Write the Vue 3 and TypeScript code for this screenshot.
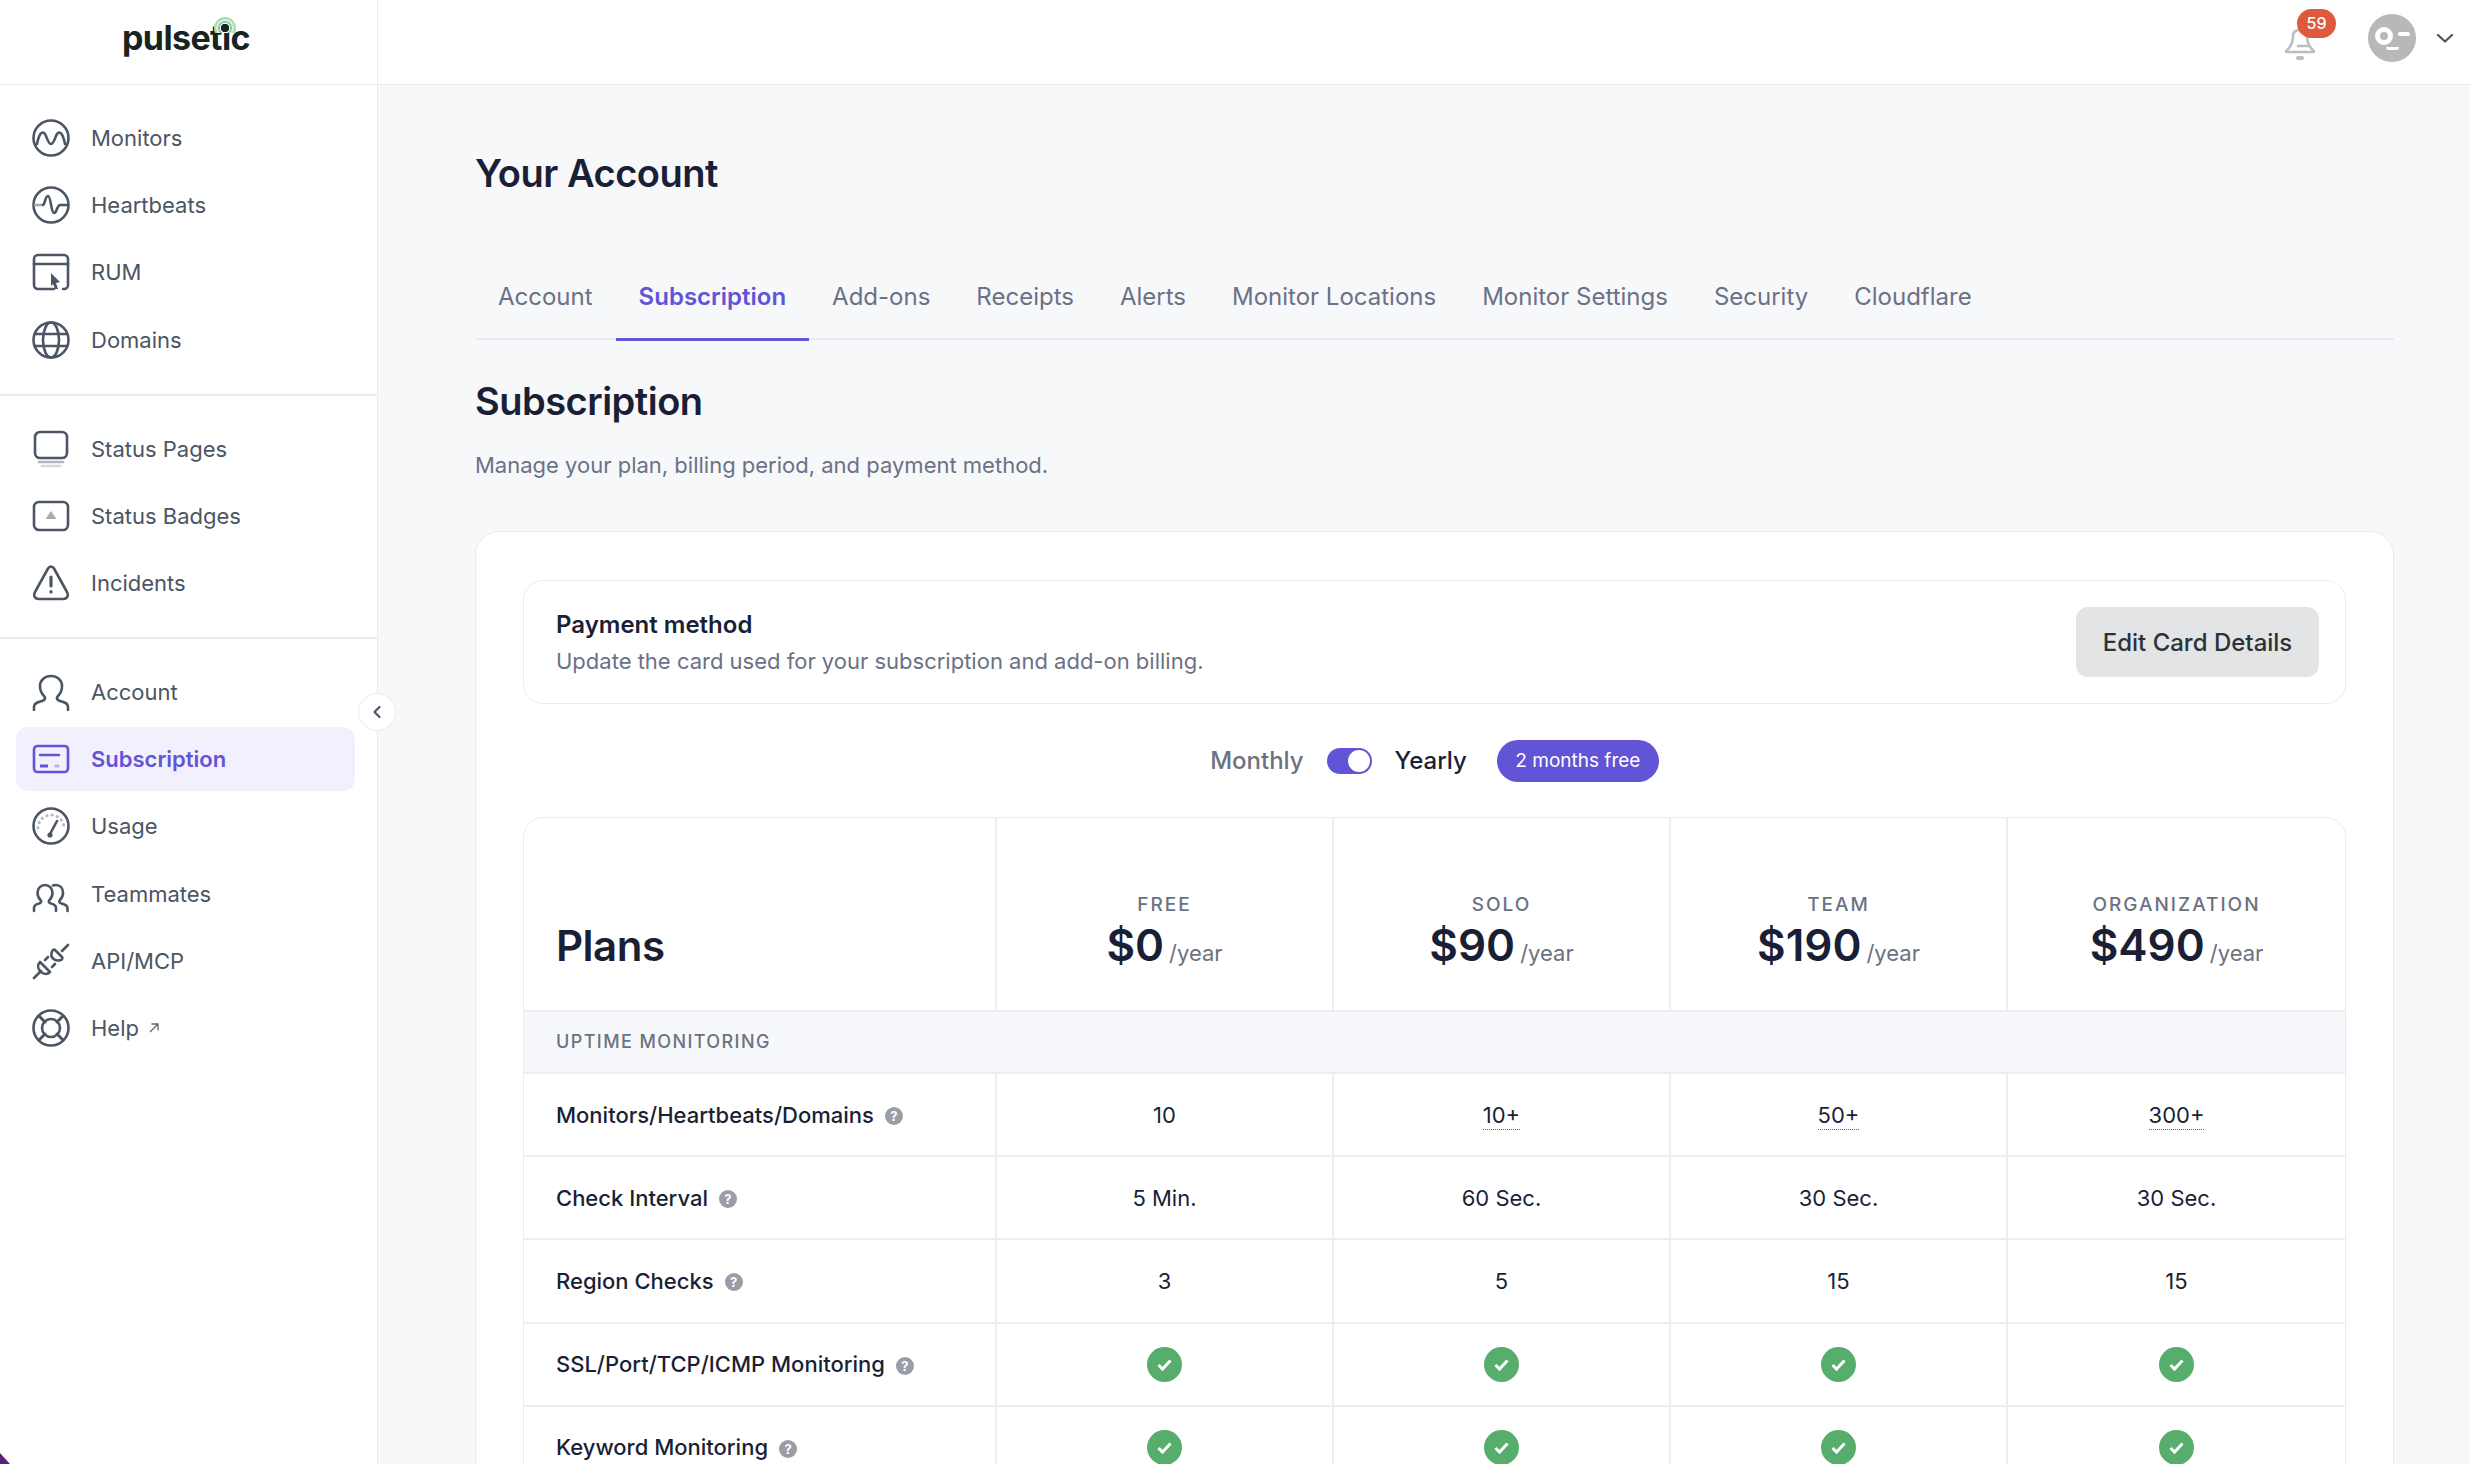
<template>
  <div class="shell">
    <aside class="sidebar">
      <div class="logo">
        <span class="logo-text">pulsetic</span>
        <span class="logo-ring"></span>
      </div>

      <nav v-for="(group, i) in navGroups" :key="i" class="nav-group">
        <a
          v-for="item in group"
          :key="item.label"
          class="nav-item"
          :class="{ active: item.label === 'Subscription' }"
        >
          <svg class="nav-icon" viewBox="0 0 38 38" fill="none" stroke="currentColor" stroke-width="2.6" stroke-linecap="round" stroke-linejoin="round">
            <template v-if="item.icon === 'monitor'">
              <circle cx="19" cy="19" r="17.5" />
              <path d="M5 25C7 15 10 11 13 15C15 18 16 25 19 25C22 25 23 18 25 15C28 11 31 15 33 25" />
            </template>
            <template v-else-if="item.icon === 'heartbeat'">
              <circle cx="19" cy="19" r="17.5" />
              <path d="M3 19H11" stroke="#a4a8b2" />
              <path d="M11 19C13 19 13 10 16 10C19 10 19 27 22 27C25 27 25 19 28 19H35" />
            </template>
            <template v-else-if="item.icon === 'rum'">
              <path d="M22 36H6a4 4 0 0 1-4-4V6a4 4 0 0 1 4-4h26a4 4 0 0 1 4 4v26a4 4 0 0 1-4 4h-1" />
              <path d="M2 11H36" />
              <path d="M19 20L28 29L24 30L26 36L23 36L21 31L19 33Z" fill="currentColor" stroke="none" />
            </template>
            <template v-else-if="item.icon === 'globe'">
              <circle cx="19" cy="19" r="17.5" />
              <ellipse cx="19" cy="19" rx="8" ry="17.5" />
              <path d="M3.5 13H34.5M3.5 25H34.5" />
            </template>
            <template v-else-if="item.icon === 'page'">
              <rect x="3" y="2" width="32" height="26" rx="5" />
              <path d="M7 32H31" stroke="#b4b7be" />
              <path d="M10 36H28" stroke="#d5d7db" />
            </template>
            <template v-else-if="item.icon === 'badge'">
              <rect x="2" y="5" width="34" height="28" rx="5" />
              <path d="M19 14L24.5 22H13.5Z" fill="#a8abb2" stroke="none" />
            </template>
            <template v-else-if="item.icon === 'alert'">
              <path d="M16 4.500C17.500 2 20.500 2 22 4.500L35 28C37 32 35 35 31 35H7C3 35 1 32 3 28Z" />
              <path d="M19 13V22" stroke-width="3.200" />
              <path d="M19 27.500V28" stroke-width="3.200" />
            </template>
            <template v-else-if="item.icon === 'user'">
              <path d="M2 37v-3c0-4 4-5 8-6c3-1 4-3 2-5c-3-3-4-6-4-10c0-6 5-10 11-10s11 4 11 10c0 4-1 7-4 10c-2 2-1 4 2 5c4 1 8 2 8 6v3" />
            </template>
            <template v-else-if="item.icon === 'card'">
              <rect x="2" y="6" width="34" height="26" rx="3.500" />
              <path d="M8 15H27" stroke-width="2.400" stroke-dasharray="2 1.500 12 1.500 2 1.500 2" />
              <path d="M8 26H16" stroke-width="3" stroke-linecap="butt" />
              <path d="M24 26H26" stroke-width="3" stroke="#b3adec" />
            </template>
            <template v-else-if="item.icon === 'gauge'">
              <circle cx="19" cy="19" r="17.5" />
              <path d="M6 21A13 13 0 0 1 32 21" stroke="#b4b7be" stroke-dasharray="0.500 4.800" stroke-width="2.800" />
              <path d="M18 27L25 14" stroke-width="2.600" />
              <circle cx="18" cy="28" r="2.600" fill="currentColor" stroke="none" />
            </template>
            <template v-else-if="item.icon === 'team'">
              <path d="M2 36v-3c0-3 3-4 5-4.500c2-.5 3-2 1.500-3.500c-2-2-3-4-3-7c0-5 3.500-8 7.500-8s7.500 3 7.500 8c0 3-1 5-3 7c-1.500 1.500-.5 3 1.500 3.500c2 .5 5 1.500 5 4.500v3" />
              <path d="M21 10.500c1-.5 2-.500 3-.5c4 0 7 3 7 8c0 3-1 5-3 7c-1.500 1.500-.5 3 1.500 3.500c2 .5 6 1.500 6 4.500v3" />
            </template>
            <template v-else-if="item.icon === 'plug'">
              <path d="M2 36L9 29" />
              <path d="M8 20L18 30C15 33 11 32 8.500 29.500C6 27 5 23 8 20Z" />
              <path d="M13 18L16 15M20 25L23 22" />
              <path d="M23 8L30 15C31 16 30 18 29 18C26 19 23 18.500 21 16.500C19 14.500 19 12 20 9.500C20.500 8 22 7 23 8Z" />
              <path d="M30 9L36 3" />
            </template>
            <template v-else>
              <circle cx="19" cy="19" r="17.5" />
              <circle cx="19" cy="19" r="9" />
              <path d="M7 7L13 13M31 7L25 13M7 31L13 25M31 31L25 25" stroke-width="3" />
            </template>
          </svg>
          <span>{{ item.label }}</span>
          <svg v-if="item.external" class="ext-icon" viewBox="0 0 12 12" fill="none" stroke="currentColor" stroke-width="1.300">
            <path d="M2 10L10 2M3.500 2H10V8.500" />
          </svg>
        </a>
      </nav>

      <button class="collapse-btn" type="button" aria-label="Collapse sidebar">
        <svg viewBox="0 0 12 16" width="10" height="14" fill="none" stroke="#4b5563" stroke-width="2.600" stroke-linecap="round" stroke-linejoin="round">
          <path d="M9 2L3 8L9 14" />
        </svg>
      </button>
      <span class="corner"></span>
    </aside>

    <div class="main">
      <header class="topbar">
        <div class="bell">
          <svg viewBox="0 0 32 34" width="32" height="34" fill="none" stroke="#bcbdc0" stroke-width="2.500" stroke-linecap="round" stroke-linejoin="round">
            <path d="M9 9C9 5 12 3 16 3C20 3 23 5 23 9C23 16 25 20 30 24C30 25 30 25 29 25H3C2 25 2 25 2 24C7 20 9 16 9 9Z" />
            <path d="M14 31H18" stroke-width="4" />
            <path d="M14 19H24" />
          </svg>
          <span class="bell-count">59</span>
        </div>
        <div class="avatar">
          <span class="avatar-eye"></span>
          <span class="avatar-brow"></span>
          <span class="avatar-mouth"></span>
        </div>
        <svg class="caret" viewBox="0 0 18 10" width="18" height="10" fill="none" stroke="#4b5563" stroke-width="2.200" stroke-linecap="round" stroke-linejoin="round">
          <path d="M2 2L9 8.500L16 2" />
        </svg>
      </header>

      <main class="content">
        <h1 class="page-title">Your Account</h1>

        <div class="tabs">
          <a v-for="tab in tabs" :key="tab" class="tab" :class="{ current: tab === 'Subscription' }">{{ tab }}</a>
        </div>

        <h2 class="section-title">Subscription</h2>
        <p class="section-sub">Manage your plan, billing period, and payment method.</p>

        <section class="card">
          <div class="payment">
            <div>
              <div class="payment-title">Payment method</div>
              <div class="payment-sub">Update the card used for your subscription and add-on billing.</div>
            </div>
            <button class="edit-btn" type="button">Edit Card Details</button>
          </div>

          <div class="billing">
            <span class="billing-off">Monthly</span>
            <span class="switch"><span class="knob"></span></span>
            <span class="billing-on">Yearly</span>
            <span class="pill">2 months free</span>
          </div>

          <div class="plans">
            <div class="row head">
              <div class="cell feature plans-title">Plans</div>
              <div v-for="plan in plans" :key="plan.name" class="cell plan">
                <div class="plan-name">{{ plan.name }}</div>
                <div class="plan-price">{{ plan.price }}<span class="per">/year</span></div>
              </div>
            </div>

            <div class="group-label">UPTIME MONITORING</div>

            <div v-for="row in rows" :key="row.label" class="row">
              <div class="cell feature">
                {{ row.label }}
                <span class="hint">?</span>
              </div>
              <div v-for="(value, idx) in row.values" :key="idx" class="cell value">
                <svg v-if="value === true" class="check" viewBox="0 0 35 35">
                  <circle cx="17.500" cy="17.500" r="17.500" fill="#57ad6b" />
                  <path d="M11.500 18L15.500 22L23.500 13.500" fill="none" stroke="#fff" stroke-width="3" />
                </svg>
                <span v-else :class="{ dotted: String(value).endsWith('+') }">{{ value }}</span>
              </div>
            </div>
          </div>
        </section>
      </main>
    </div>
  </div>
</template>

<script setup lang="ts">
interface NavItem {
  label: string
  icon: string
  external?: boolean
}

interface FeatureRow {
  label: string
  values: (string | boolean)[]
}

const navGroups: NavItem[][] = [
  [
    { label: 'Monitors', icon: 'monitor' },
    { label: 'Heartbeats', icon: 'heartbeat' },
    { label: 'RUM', icon: 'rum' },
    { label: 'Domains', icon: 'globe' },
  ],
  [
    { label: 'Status Pages', icon: 'page' },
    { label: 'Status Badges', icon: 'badge' },
    { label: 'Incidents', icon: 'alert' },
  ],
  [
    { label: 'Account', icon: 'user' },
    { label: 'Subscription', icon: 'card' },
    { label: 'Usage', icon: 'gauge' },
    { label: 'Teammates', icon: 'team' },
    { label: 'API/MCP', icon: 'plug' },
    { label: 'Help', icon: 'help', external: true },
  ],
]

const tabs = [
  'Account',
  'Subscription',
  'Add-ons',
  'Receipts',
  'Alerts',
  'Monitor Locations',
  'Monitor Settings',
  'Security',
  'Cloudflare',
]

const plans = [
  { name: 'FREE', price: '$0' },
  { name: 'SOLO', price: '$90' },
  { name: 'TEAM', price: '$190' },
  { name: 'ORGANIZATION', price: '$490' },
]

const rows: FeatureRow[] = [
  { label: 'Monitors/Heartbeats/Domains', values: ['10', '10+', '50+', '300+'] },
  { label: 'Check Interval', values: ['5 Min.', '60 Sec.', '30 Sec.', '30 Sec.'] },
  { label: 'Region Checks', values: ['3', '5', '15', '15'] },
  { label: 'SSL/Port/TCP/ICMP Monitoring', values: [true, true, true, true] },
  { label: 'Keyword Monitoring', values: [true, true, true, true] },
]
</script>

<style>
html,
body {
  margin: 0;
  overflow: hidden;
  background: #f7f8fa;
}
</style>

<style scoped>
.shell {
  display: flex;
  height: 100vh;
  overflow: hidden;
  font-family: Inter, "Liberation Sans", sans-serif;
  color: #1a1f36;
}

/* sidebar */
.sidebar {
  position: relative;
  flex: 0 0 378px;
  box-sizing: border-box;
  background: #fff;
  border-right: 1px solid #e9ebf0;
}

.logo {
  position: relative;
  height: 85px;
  box-sizing: border-box;
  padding-left: 122px;
  border-bottom: 1px solid #e9ebf0;
  line-height: 76px;
}

.logo-text {
  font-size: 34px;
  font-weight: 700;
  letter-spacing: -0.6px;
  color: #18241f;
}

.logo-ring {
  position: absolute;
  left: 214px;
  top: 17px;
  width: 22px;
  height: 22px;
  border-radius: 50%;
  background: radial-gradient(circle, #18241f 0 4px, #fff 4.5px 5px, #7ecb95 5.5px 6.5px, #d5efdc 7px 8.5px, #a9dcb8 9px 11px);
  clip-path: inset(0 0 6px 0);
}

.nav-group {
  display: flex;
  flex-direction: column;
  gap: 3.2px;
  padding: 21px 22px 22px 16px;
  border-bottom: 2px solid #e9ebf0;
}

.nav-group:last-of-type {
  border-bottom: none;
}

.nav-item {
  display: flex;
  align-items: center;
  height: 64px;
  padding-left: 16px;
  border-radius: 12px;
  font-size: 22px;
  color: #4b5563;
}

.nav-item.active {
  background: #f2f0fc;
  color: #6254d6;
  font-weight: 600;
}

.nav-icon {
  flex: none;
  width: 38px;
  height: 38px;
  margin-right: 21px;
}

.ext-icon {
  width: 12px;
  height: 12px;
  margin-left: 9px;
  color: #5d6472;
}

.collapse-btn {
  position: absolute;
  left: 358px;
  top: 693px;
  display: flex;
  align-items: center;
  justify-content: center;
  width: 38px;
  height: 38px;
  padding: 0;
  border: 1px solid #e9ebf0;
  border-radius: 50%;
  background: #fff;
}

.corner {
  position: absolute;
  left: 0;
  bottom: 0;
  width: 10px;
  height: 11px;
  background: #5b2176;
  clip-path: polygon(0 0, 100% 100%, 0 100%);
}

/* top bar */
.main {
  flex: 1;
  min-width: 0;
}

.topbar {
  display: flex;
  align-items: center;
  justify-content: flex-end;
  height: 85px;
  box-sizing: border-box;
  padding-right: 16px;
  background: #fff;
  border-bottom: 1px solid #e9ebf0;
}

.bell {
  position: relative;
  height: 34px;
  margin: 4px 52px 0 0;
}

.bell-count {
  position: absolute;
  left: 13px;
  top: -18px;
  width: 39px;
  height: 29px;
  border-radius: 15px;
  background: #dd5a3e;
  color: #fff;
  font-size: 16px;
  font-weight: 500;
  line-height: 29px;
  text-align: center;
}

.avatar {
  position: relative;
  width: 48px;
  height: 48px;
  margin: -9px 20px 0 0;
  border-radius: 50%;
  background: #b8b8b8;
}

.avatar-eye {
  position: absolute;
  left: 7px;
  top: 13px;
  width: 8px;
  height: 8px;
  border: 5px solid #fff;
  border-radius: 50%;
}

.avatar-brow {
  position: absolute;
  left: 30px;
  top: 18px;
  width: 12px;
  height: 4px;
  border-radius: 2px;
  background: #fff;
}

.avatar-mouth {
  position: absolute;
  left: 18px;
  top: 33px;
  width: 13px;
  height: 3px;
  border-radius: 0 0 8px 8px;
  background: #fff;
}

.caret {
  margin-top: -9px;
}

/* page */
.content {
  padding: 64px 76px 0 97px;
}

.page-title,
.section-title {
  margin: 0;
  font-size: 38px;
  font-weight: 600;
  line-height: 48px;
  letter-spacing: -0.5px;
  color: #1a1f36;
}

.tabs {
  display: flex;
  height: 86px;
  box-sizing: content-box;
  margin-top: 55px;
  border-bottom: 2px solid #e9ebf0;
}

.tab {
  box-sizing: border-box;
  height: 89px;
  padding: 30px 23px 0;
  font-size: 24px;
  line-height: 30px;
  color: #6b7186;
}

.tab.current {
  color: #6254d6;
  font-weight: 600;
  border-bottom: 3px solid #6254d6;
}

.section-title {
  margin-top: 37px;
}

.section-sub {
  margin: 26px 0 0;
  font-size: 22px;
  line-height: 28px;
  color: #6b7186;
}

.card {
  box-sizing: border-box;
  height: 1100px;
  margin-top: 52px;
  padding: 48px 47px;
  background: #fff;
  border: 1px solid #e9ebf0;
  border-radius: 24px;
}

.payment {
  display: flex;
  align-items: center;
  justify-content: space-between;
  box-sizing: border-box;
  height: 124px;
  padding: 0 26px 0 32px;
  border: 1px solid #e9ebf0;
  border-radius: 20px;
}

.payment-title {
  font-size: 24px;
  font-weight: 600;
  line-height: 30px;
}

.payment-sub {
  margin-top: 7px;
  font-size: 22px;
  line-height: 28px;
  color: #6b7186;
}

.edit-btn {
  width: 243px;
  height: 70px;
  border: none;
  border-radius: 12px;
  background: #e3e4e6;
  color: #2e3136;
  font-family: inherit;
  font-size: 24px;
  font-weight: 500;
}

.billing {
  display: flex;
  align-items: center;
  justify-content: center;
  height: 113px;
  font-size: 24px;
  font-weight: 500;
}

.billing-off {
  color: #6b7280;
}

.switch {
  display: flex;
  align-items: center;
  justify-content: flex-end;
  box-sizing: border-box;
  width: 45px;
  height: 26px;
  margin: 0 23px;
  padding-right: 2px;
  border-radius: 13px;
  background: #6254d6;
}

.knob {
  width: 22px;
  height: 22px;
  border-radius: 50%;
  background: #fff;
}

.pill {
  display: flex;
  align-items: center;
  justify-content: center;
  width: 162px;
  height: 42px;
  margin-left: 30px;
  border-radius: 21px;
  background: #6254d6;
  color: #fff;
  font-size: 19px;
  font-weight: 400;
}

.plans {
  border: 1px solid #e9ebf0;
  border-radius: 20px;
  overflow: hidden;
}

.row {
  display: grid;
  grid-template-columns: 473px repeat(4, 1fr);
  height: 83.2px;
  box-sizing: border-box;
  border-top: 2px solid #eceef2;
}

.row.head {
  height: 192px;
  border-top: none;
}

.cell {
  display: flex;
  align-items: center;
  justify-content: center;
  border-right: 2px solid #eceef2;
}

.cell:last-child {
  border-right: none;
}

.feature {
  justify-content: flex-start;
  padding-left: 32px;
  font-size: 22px;
  font-weight: 500;
  color: #1a1f36;
}

.plans-title {
  align-items: flex-end;
  padding-bottom: 38px;
  font-size: 42px;
  font-weight: 600;
  line-height: 52px;
  letter-spacing: -0.5px;
}

.plan {
  flex-direction: column;
  justify-content: flex-end;
  padding-bottom: 31px;
}

.plan-name {
  font-size: 19px;
  font-weight: 500;
  line-height: 24px;
  letter-spacing: 2px;
  color: #6b7280;
}

.plan-price {
  margin-top: 2px;
  font-size: 44px;
  font-weight: 600;
  line-height: 52px;
}

.per {
  margin-left: 5px;
  font-size: 22px;
  font-weight: 400;
  color: #6b7280;
}

.group-label {
  box-sizing: border-box;
  height: 62px;
  padding-left: 32px;
  background: #f7f8fb;
  border-top: 2px solid #eceef2;
  font-size: 18px;
  font-weight: 500;
  line-height: 60px;
  letter-spacing: 1.400px;
  color: #6b7280;
}

.hint {
  display: flex;
  align-items: center;
  justify-content: center;
  width: 18px;
  height: 18px;
  margin: 3px 0 0 11px;
  border-radius: 50%;
  background: #9a9ca6;
  color: #fff;
  font-size: 13px;
  font-weight: 700;
}

.value {
  font-size: 22px;
  color: #1a1f36;
}

.dotted {
  padding: 1px 0;
  border-top: 1px solid transparent;
  border-bottom: 1px dotted #5d6480;
}

.check {
  width: 35px;
  height: 35px;
}
</style>
